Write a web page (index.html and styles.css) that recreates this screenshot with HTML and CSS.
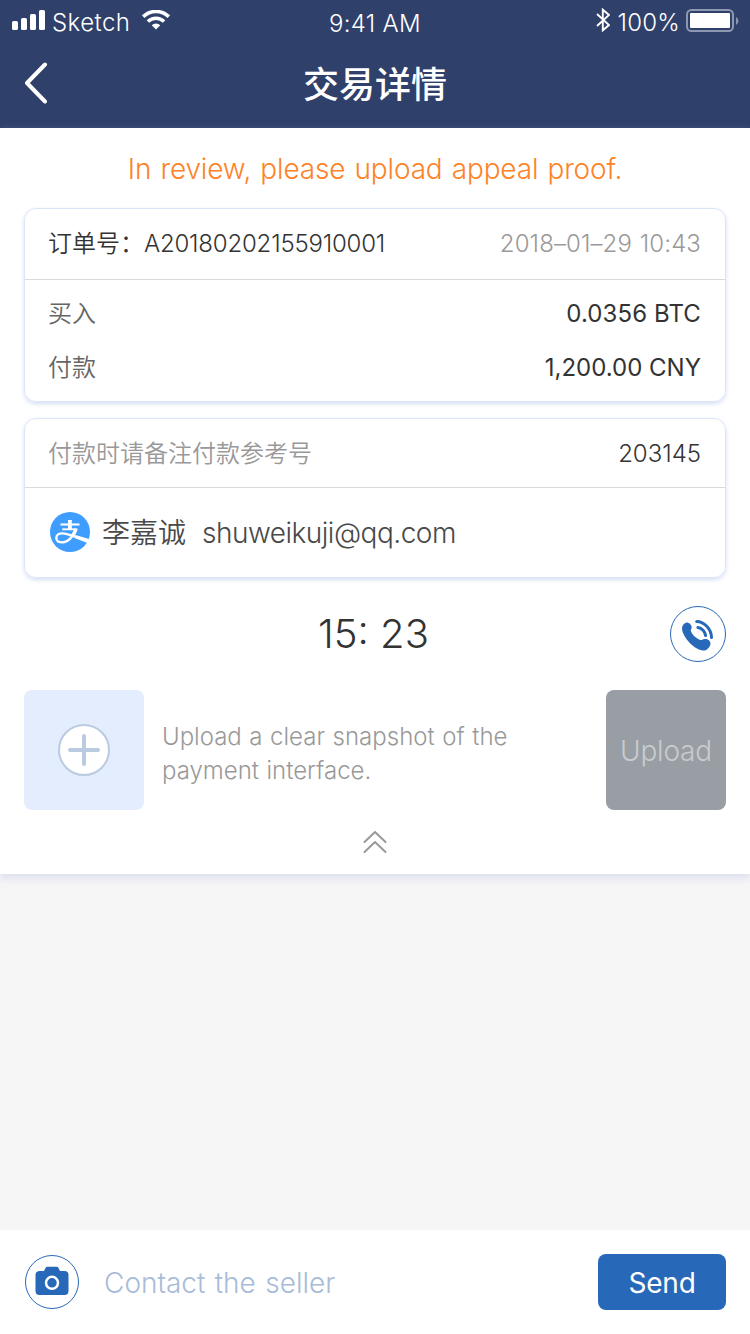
FILE: index.html
```html
<!DOCTYPE html>
<html lang="zh-CN">
<head>
<meta charset="utf-8">
<title>交易详情</title>
<link rel="stylesheet" href="styles.css">
</head>
<body>
<div class="screen">
  <header class="header">
    <div class="status">
      <div class="status-left">
        <svg class="signal" width="34" height="20" viewBox="0 0 34 20" fill="#fff"><rect y="11" width="6" height="9" rx="1.6"/><rect x="9" y="8" width="6" height="12" rx="1.6"/><rect x="18" y="4" width="6" height="16" rx="1.6"/><rect x="27" width="6" height="20" rx="1.6"/></svg>
        <span class="carrier">Sketch</span>
        <svg class="wifi" width="28" height="20" viewBox="0 0 28 20"><g fill="none" stroke="#fff" stroke-width="3.6"><path d="M1.2 6.7a18.3 18.3 0 0 1 25.6 0"/><path d="M5.9 11.5a11.6 11.6 0 0 1 16.2 0"/></g><path d="M9.7 15.2a6.2 6.2 0 0 1 8.6 0L14 19.6z" fill="#fff"/></svg>
      </div>
      <span class="clock">9:41 AM</span>
      <div class="status-right">
        <svg class="bluetooth" width="14" height="24" viewBox="0 0 14 24" fill="none" stroke="#fff" stroke-width="1.9"><path d="M1 6l12 11-6.200 5.300V1.700L13 7 1 18"/></svg>
        <span class="percent">100%</span>
        <svg class="battery" width="54" height="24" viewBox="0 0 54 24"><rect x="1" y="1" width="46" height="21" rx="4.500" fill="none" stroke="#8c97b1" stroke-width="2"/><rect x="4" y="4" width="40" height="15" rx="1" fill="#fff"/><path d="M50 8a4.500 4.500 0 0 1 0 8z" fill="#8c97b1"/></svg>
      </div>
    </div>
    <div class="navbar">
      <svg class="back" width="24" height="42" viewBox="0 0 24 42" fill="none" stroke="#fff" stroke-width="4" stroke-linecap="round" stroke-linejoin="round"><path d="M21 2.500L3 21l18 18.500"/></svg>
      <h1 class="title">交易详情</h1>
    </div>
  </header>

  <main class="panel">
    <p class="notice">In review, please upload appeal proof.</p>

    <section class="card order">
      <div class="card-head">
        <div class="order-label"><span>订单号：</span><span class="order-id">A20180202155910001</span></div>
        <span class="date">2018–01–29 10:43</span>
      </div>
      <dl class="amounts">
        <div class="amount-row"><dt>买入</dt><dd class="btc">0.0356 BTC</dd></div>
        <div class="amount-row"><dt>付款</dt><dd class="cny">1,200.00 CNY</dd></div>
      </dl>
    </section>

    <section class="card payment">
      <div class="card-head">
        <span class="hint">付款时请备注付款参考号</span>
        <span class="ref">203145</span>
      </div>
      <div class="payee">
        <svg class="alipay" width="40" height="40" viewBox="0 0 40 40"><circle cx="20" cy="20" r="20" fill="#3e9dff"/><g fill="none" stroke="#fff"><path d="M19.900 8v9" stroke-width="3.800"/><path d="M10.500 12.500h19" stroke-width="2.100"/><path d="M12.300 17.300h15" stroke-width="1.900"/><path d="M26 17c-1.800 6-7.300 13.300-13.500 13.300-4.200 0-6.200-2-6.200-4.400 0-2.800 2.600-4.600 6.200-4.600 6 0 14 4.700 25.900 7.300" stroke-width="2.300"/><path d="M26 17c-.8 2.800-2.300 5.400-4.400 7.700" stroke-width="3.400"/></g><path d="M25.500 22.900l13.500 4-1.600 4-12.900-5z" fill="#fff"/></svg>
        <span class="payee-name">李嘉诚</span>
        <span class="payee-mail">shuweikuji@qq.com</span>
      </div>
    </section>

    <div class="timer-row">
      <span class="timer">15: 23</span>
      <svg class="call" width="56" height="56" viewBox="0 0 56 56"><circle cx="28" cy="28" r="27.500" fill="#fff" stroke="#2868b9"/><path d="M12.300 20.500c.8-2.300 2.400-3.900 4.700-4.100 1.900 0 4.700 2.300 4.700 4.900 0 1.800-1.300 2.500-.8 4 1.100 3.100 4.200 6.100 7.300 7.800 1.400.8 2.500 1.200 3.500.8 1.200-.5 2-.8 3.300-.8 3 0 5.500 2.100 5.500 4.200-.2 3.800-3.800 7.500-7.100 7.300-9.600-1-20.200-13-21.300-21.100-.1-1.100-.1-2 .2-3z" fill="#2868b9"/><g fill="none" stroke="#2868b9" stroke-width="3" stroke-linecap="round"><path d="M26.700 15.400c7.800 0 14.800 8.400 14.800 16.100M27.900 21.400c4 .4 7.300 4.200 7.700 8.200"/></g></svg>
    </div>

    <div class="upload-row">
      <div class="picker"><svg width="52" height="52" viewBox="0 0 52 52"><circle cx="26" cy="26" r="25" fill="#fff" stroke="#bacae1" stroke-width="2"/><path d="M12 26h28M26 12v28" stroke="#bacae1" stroke-width="4" stroke-linecap="round"/></svg></div>
      <p class="upload-text"><span class="line-one">Upload a clear snapshot of the</span><br><span class="line-two">payment interface.</span></p>
      <button class="upload-button">Upload</button>
    </div>

    <div class="collapse"><svg width="24" height="24" viewBox="0 0 24 24" fill="none" stroke="#999" stroke-width="2" stroke-linecap="round" stroke-linejoin="round"><path d="M1.500 12L12 2l10.500 10M1.500 22L12 12l10.500 10"/></svg></div>
  </main>

  <div class="conversation"></div>

  <footer class="composer">
    <svg class="camera" width="54" height="54" viewBox="0 0 54 54"><circle cx="27" cy="27" r="26.500" fill="#fff" stroke="#2868b9"/><path d="M15 16h4l1.500-3q.6-1.200 2-1.200h9q1.400 0 2 1.200L35 16h4.500q4 0 4 4v16q0 4-4 4h-25q-4 0-4-4V20q0-4 4.500-4z" fill="#2868b9"/><circle cx="27" cy="27.800" r="6" fill="none" stroke="#fff" stroke-width="2.500"/></svg>
    <span class="placeholder">Contact the seller</span>
    <button class="send">Send</button>
  </footer>
</div>
</body>
</html>
```

FILE: styles.css
```css
* { box-sizing: border-box; }
body { margin: 0; }
p, h1, dl, dd { margin: 0; }
svg { display: block; flex: none; }
button { border: 0; padding: 0; font: inherit; }

.screen {
  width: 750px;
  height: 1334px;
  display: flex;
  flex-direction: column;
  background: #f6f6f6;
  color: #333;
  font: 350 24px/34px Inter, "Noto Sans CJK SC", sans-serif;
  white-space: nowrap;
  overflow: hidden;
}

.header { height: 128px; background: #2f406b; color: #fff; }
.status {
  height: 40px;
  display: grid;
  grid-template-columns: 1fr auto 1fr;
  padding: 0 12px;
  line-height: 46px;
}
.status-left, .status-right { display: flex; align-items: flex-start; }
.status-right { justify-content: flex-end; margin-right: -2px; }
.signal { margin-top: 10px; }
.carrier { margin-left: 6px; letter-spacing: .45px; }
.wifi { margin: 10px 0 0 12px; }
.clock { line-height: 48px; letter-spacing: .3px; }
.bluetooth { margin-top: 8px; }
.percent { margin-left: 8px; letter-spacing: .2px; }
.battery { margin: 9px 0 0 6px; }
.navbar {
  height: 88px;
  display: grid;
  grid-template-columns: 1fr auto 1fr;
  align-items: center;
  padding: 0 24px;
}
.back { margin-top: -2px; }
.title { font-size: 36px; line-height: 50px; font-weight: 500; padding-top: 2px; }

.panel {
  height: 746px;
  padding: 0 24px;
  background: #fff;
  box-shadow: 0 4px 8px rgba(190, 200, 228, .5);
}
.notice {
  padding: 21px 0 19px;
  height: 80px;
  text-align: center;
  color: #fd8329;
  font-size: 28px;
  line-height: 40px;
  letter-spacing: -.15px;
  word-spacing: 1.4px;
}
.card {
  border: 1px solid #dce5f8;
  border-radius: 12px;
  box-shadow: 0 2px 4px #d5dff5;
}
.card-head {
  display: flex;
  justify-content: space-between;
  align-items: center;
  padding: 0 24px 0 23px;
  border-bottom: 1px solid #d8dade;
}
.order { height: 194px; }
.order .card-head { height: 71px; }
.order-label { display: flex; }
.order-id { letter-spacing: -.2px; }
.date, .hint { color: #999; }
.date { letter-spacing: .1px; word-spacing: 1px; }
.amounts { padding: 17px 24px 0 23px; display: grid; gap: 20px; }
.amount-row { display: flex; justify-content: space-between; }
.amount-row dt { color: #666; }
.amount-row dd { font-weight: 400; }
.btc { letter-spacing: .1px; }
.payment { height: 160px; margin-top: 16px; }
.payment .card-head { height: 69px; padding-top: 2px; }
.payee {
  height: 88px;
  display: flex;
  align-items: center;
  padding: 0 25px;
  color: #494949;
}
.payee-name, .payee-mail { font-size: 28px; padding-top: 2px; }
.payee-name { margin-left: 12px; }
.payee-mail { margin-left: 16px; letter-spacing: -.5px; }

.timer-row {
  height: 56px;
  margin-top: 28px;
  display: grid;
  grid-template-columns: 1fr auto 1fr;
  align-items: center;
}
.timer { grid-column: 2; font-size: 40px; line-height: 56px; padding-right: 3px; }
.call { justify-self: end; }
.upload-row { margin-top: 28px; height: 120px; display: flex; align-items: center; }
.picker {
  width: 120px;
  height: 120px;
  display: grid;
  place-items: center;
  border-radius: 8px;
  background: #e3edfd;
}
.upload-text { margin: 7px auto 0 18px; color: #999; word-spacing: .8px; }
.upload-button {
  width: 120px;
  height: 120px;
  border-radius: 8px;
  background: #999ea5;
  color: #c8cbcf;
  font-size: 28px;
  padding-top: 2px;
  letter-spacing: -.2px;
}
.collapse { display: flex; justify-content: center; margin-top: 20px; padding-right: 1px; }

.conversation { flex: 1; }
.composer {
  height: 104px;
  display: flex;
  align-items: center;
  padding: 0 24px 0 25px;
  background: #fff;
  font-size: 28px;
}
.placeholder { margin: 0 auto 0 25px; padding-top: 1px; color: #a8bcd8; word-spacing: 1.5px; }
.send {
  width: 128px;
  height: 56px;
  border-radius: 8px;
  background: #2868b9;
  color: #fff;
  font-weight: 400;
  padding-top: 1px;
  letter-spacing: -.2px;
}
```
